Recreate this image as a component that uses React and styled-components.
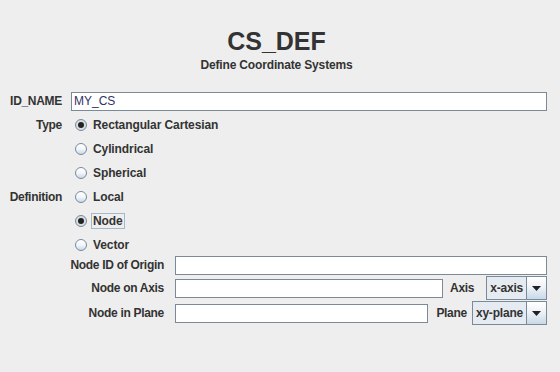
import React from 'react'
import styled, { createGlobalStyle } from 'styled-components'

const GlobalStyle = createGlobalStyle`
  html, body {
    margin: 0;
    background: #eeeeee;
  }
  body {
    font-family: "Liberation Sans", Arial, sans-serif;
    color: #333333;
  }
`

const Panel = styled.div`
  width: 560px;
  height: 372px;
  box-sizing: border-box;
  padding: 27px 13px 0 0;
`

const Header = styled.div`
  display: flex;
  flex-direction: column;
  align-items: center;
  padding-left: 6px;
`

const Title = styled.div`
  font-size: 25px;
  line-height: 28px;
  font-weight: bold;
`

const Subtitle = styled.div`
  margin-top: 3px;
  font-size: 12px;
  line-height: 14px;
  font-weight: bold;
  letter-spacing: -0.16px;
`

const Form = styled.div`
  margin-top: 20px;
  display: grid;
  grid-template-columns: 62px 1fr;
  column-gap: 9px;
`

const Label = styled.div`
  font-size: 12px;
  font-weight: bold;
  text-align: right;
  white-space: nowrap;
  letter-spacing: -0.3px;
  line-height: ${p => p.$h || 24}px;
  margin-top: ${p => p.$mt || 0}px;
`

const TextField = styled.div`
  box-sizing: border-box;
  height: 19px;
  flex: ${p => p.$grow ? 1 : 'none'};
  background: #ffffff;
  border: 1px solid #7a8a99;
  padding-left: 2px;
  font-size: 12px;
  line-height: 17px;
  color: #333366;
`

const Options = styled.div`
  display: flex;
  flex-direction: column;
  padding-left: 4px;
  margin-top: ${p => p.$mt || 0}px;
`

const Option = styled.div`
  display: flex;
  align-items: center;
  height: 24px;
  gap: 4px;
  font-size: 12px;
  font-weight: bold;
  letter-spacing: -0.1px;
`

const Dot = styled.span`
  box-sizing: border-box;
  width: 12px;
  height: 12px;
  border-radius: 50%;
  border: 1px solid #7a8a99;
  background: ${p => p.$on
    ? '#d6dde5'
    : 'linear-gradient(180deg, #ffffff 0%, #f2f6fa 50%, #c9d8e7 100%)'};
  display: flex;
  align-items: center;
  justify-content: center;

  &::after {
    content: '';
    width: 6px;
    height: 6px;
    border-radius: 50%;
    background: #222222;
    display: ${p => p.$on ? 'block' : 'none'};
  }
`

const OptionText = styled.span`
  box-sizing: border-box;
  border: 1px solid ${p => p.$focus ? '#a3b8cc' : 'transparent'};
  padding: 0 1px;
  line-height: 14px;
`

const Sub = styled.div`
  margin-top: -1px;
  display: grid;
  grid-template-columns: 164px 1fr;
  column-gap: 11px;
`

const SubRow = styled.div`
  display: flex;
  align-items: center;
  height: ${p => p.$h}px;
  margin-top: ${p => p.$mt || 0}px;
`

const InlineLabel = styled.span`
  font-size: 12px;
  font-weight: bold;
  letter-spacing: -0.3px;
  margin: 0 ${p => p.$r}px 0 ${p => p.$l}px;
`

const Combo = styled.div`
  display: flex;
  height: 24px;
  box-sizing: border-box;
  border: 1px solid #7a8a99;
`

const ComboValue = styled.div`
  padding: 0 3px;
  background: #e6ebf1;
  border-right: 1px solid #7a8a99;
  font-size: 12px;
  font-weight: bold;
  letter-spacing: -0.2px;
  line-height: 22px;
  color: #333333;
`

const ComboButton = styled.div`
  width: 19px;
  display: flex;
  align-items: center;
  justify-content: center;
  background: linear-gradient(180deg, #ffffff 0%, #eef3f8 45%, #c9d8e7 100%);
`

const Arrow = () => (
  <svg width="9" height="5" viewBox="0 0 9 5">
    <path d="M0 0H9L4.5 5Z" fill="#222" />
  </svg>
)

const Select = ({ value }) => (
  <Combo>
    <ComboValue>{value}</ComboValue>
    <ComboButton><Arrow /></ComboButton>
  </Combo>
)

const Radio = ({ label, on, focus }) => (
  <Option>
    <Dot $on={on} />
    <OptionText $focus={focus}>{label}</OptionText>
  </Option>
)

export default function App() {
  return (
    <>
      <GlobalStyle />
      <Panel>
        <Header>
          <Title>CS_DEF</Title>
          <Subtitle>Define Coordinate Systems</Subtitle>
        </Header>

        <Form>
          <Label $h={19}>ID_NAME</Label>
          <TextField>MY_CS</TextField>

          <Label $mt={2}>Type</Label>
          <Options $mt={2}>
            <Radio label="Rectangular Cartesian" on />
            <Radio label="Cylindrical" />
            <Radio label="Spherical" />
          </Options>

          <Label>Definition</Label>
          <Options>
            <Radio label="Local" />
            <Radio label="Node" on focus />
            <Radio label="Vector" />
          </Options>
        </Form>

        <Sub>
          <Label $h={19}>Node ID of Origin</Label>
          <SubRow $h={19}>
            <TextField $grow />
          </SubRow>

          <Label $h={24} $mt={1}>Node on Axis</Label>
          <SubRow $h={24} $mt={1}>
            <TextField $grow />
            <InlineLabel $l={7} $r={12}>Axis</InlineLabel>
            <Select value="x-axis" />
          </SubRow>

          <Label $h={24} $mt={1}>Node in Plane</Label>
          <SubRow $h={24} $mt={1}>
            <TextField $grow />
            <InlineLabel $l={8} $r={5}>Plane</InlineLabel>
            <Select value="xy-plane" />
          </SubRow>
        </Sub>
      </Panel>
    </>
  )
}
